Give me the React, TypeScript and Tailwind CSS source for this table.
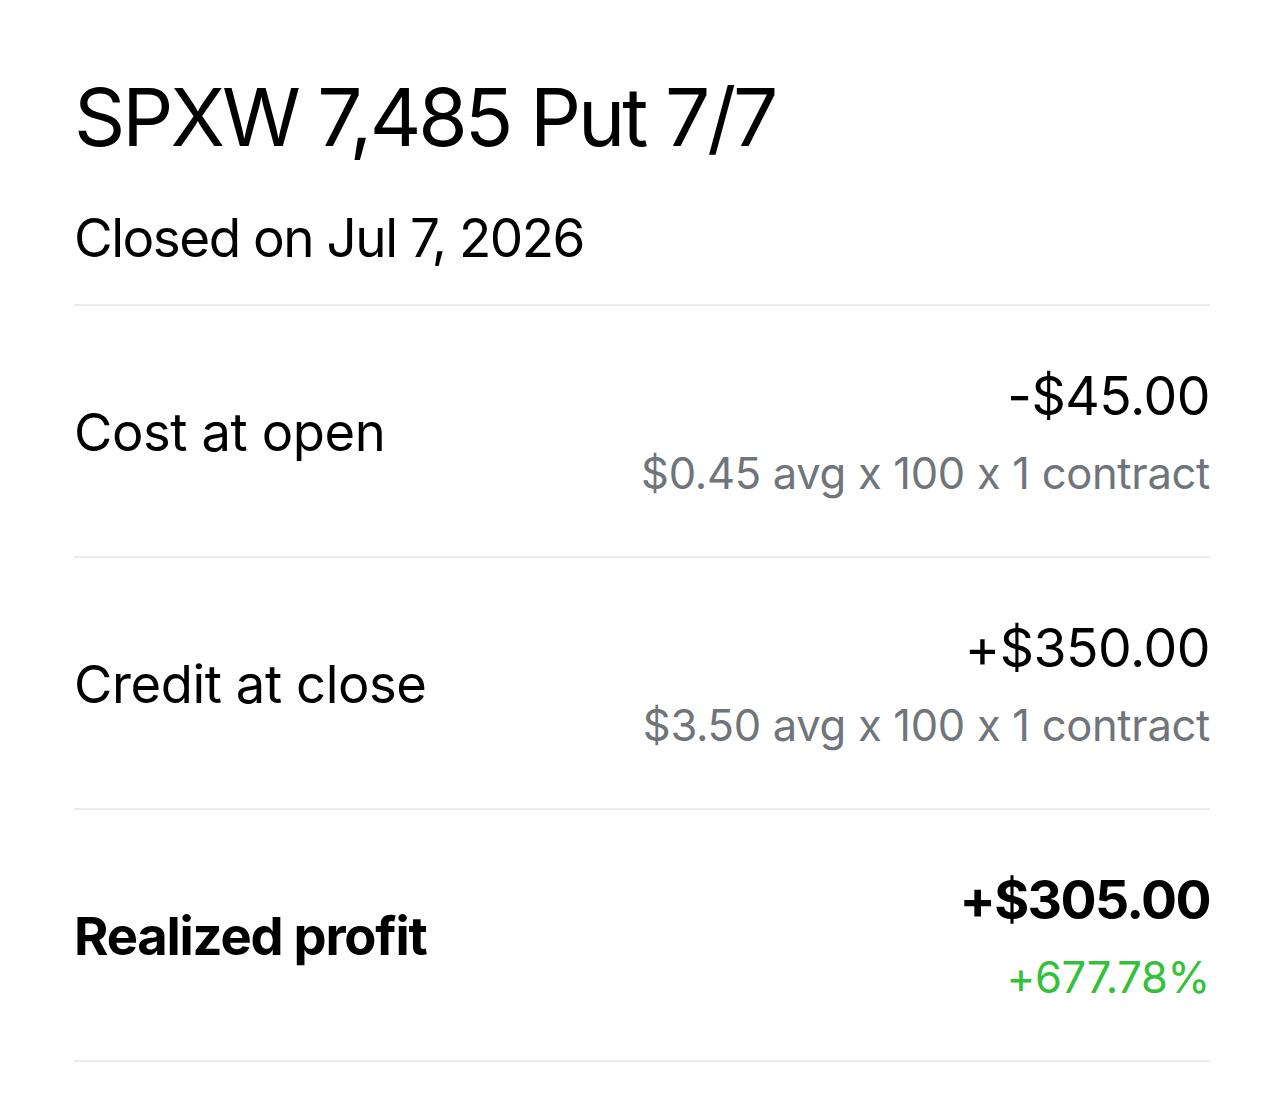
import React from "react";

const font = { fontFamily: "Inter, Roboto, 'Noto Sans', sans-serif" };

function Row({
  label,
  value,
  sub,
  bold,
  subClass,
}: {
  label: string;
  value: string;
  sub: string;
  bold?: boolean;
  subClass: string;
}) {
  return (
    <div className="flex h-[252px] items-center justify-between border-t-2 border-[#ececec]">
      <div
        className={`pt-[2px] text-[52.5px] leading-none text-black ${bold ? "font-bold tracking-[-1.2px]" : "tracking-[-0.4px]"}`}
      >
        {label}
      </div>
      <div className="flex flex-col items-end gap-[29px] pt-[2px]">
        <div
          className={`text-[53.5px] leading-none text-black ${bold ? "font-bold tracking-[-1.6px]" : "tracking-[-0.5px]"}`}
        >
          {value}
        </div>
        <div className={`text-[43.5px] leading-none tracking-[-0.3px] ${subClass}`}>{sub}</div>
      </div>
    </div>
  );
}

export default function App() {
  return (
    <div className="min-h-[1114px] w-[1284px] bg-white" style={font}>
      <div className="px-[74px] pt-[77px]">
        <h1 className="text-[80px] leading-none tracking-[-3px] text-black">SPXW 7,485 Put 7/7</h1>
        <div className="mt-[55px] text-[53px] leading-none tracking-[-1.5px] text-black">
          Closed on Jul 7, 2026
        </div>
        <div className="mt-[39px]">
          <Row label="Cost at open" value="-$45.00" sub="$0.45 avg x 100 x 1 contract" subClass="text-[#6f757b]" />
          <Row label="Credit at close" value="+$350.00" sub="$3.50 avg x 100 x 1 contract" subClass="text-[#6f757b]" />
          <Row label="Realized profit" value="+$305.00" sub="+677.78%" bold subClass="text-[#34c13a]" />
          <div className="border-t-2 border-[#ececec]" />
        </div>
      </div>
    </div>
  );
}
